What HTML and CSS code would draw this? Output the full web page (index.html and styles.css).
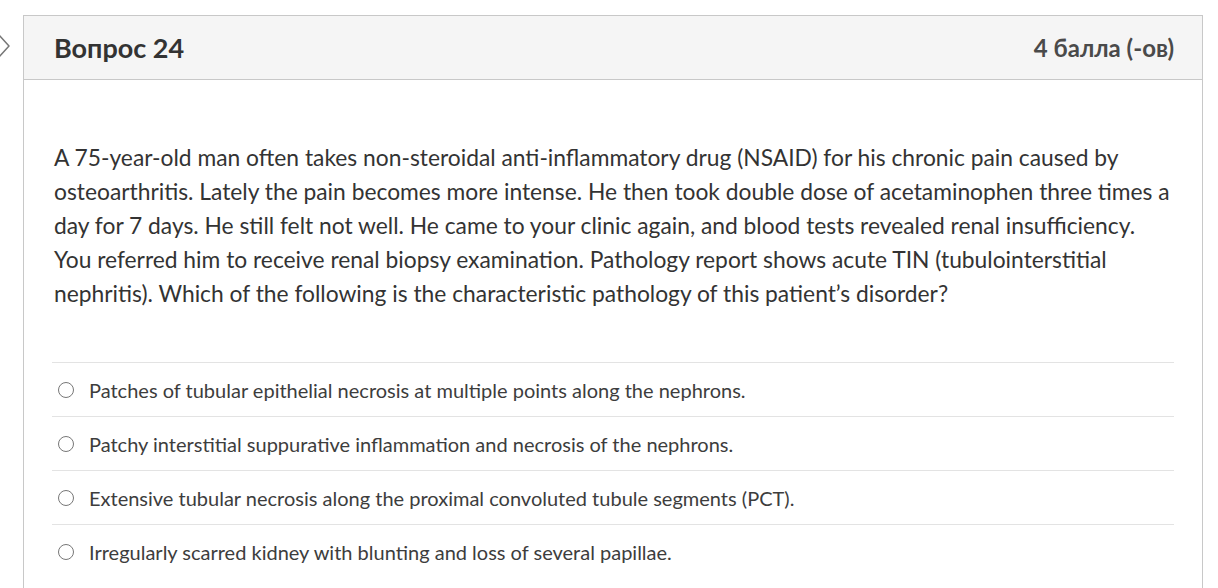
FILE: index.html
```html
<!DOCTYPE html>
<html>
<head>
<meta charset="utf-8">
<link rel="stylesheet" href="styles.css">
</head>
<body>
<div class="page">
  <div class="nav">
    <svg width="23" height="64" viewBox="0 0 23 64"><path d="M-2 19 L9 31 L-2 43" fill="none" stroke="#777" stroke-width="1.5" stroke-linejoin="round" stroke-linecap="round"/></svg>
  </div>
  <div class="card">
    <div class="card-header">
      <h2 class="title">Вопрос 24</h2>
      <div class="points">4 балла (-ов)</div>
    </div>
    <div class="card-body">
      <p class="question">A 75-year-old man often takes non-steroidal anti-inflammatory drug (NSAID) for his chronic pain caused by osteoarthritis. Lately the pain becomes more intense. He then took double dose of acetaminophen three times a day for 7 days. He still felt not well. He came to your clinic again, and blood tests revealed renal insufficiency. You referred him to receive renal biopsy examination. Pathology report shows acute TIN (tubulointerstitial nephritis). Which of the following is the characteristic pathology of this patient’s disorder?</p>
      <div class="answers">
        <label class="answer"><span class="radio"></span><span>Patches of tubular epithelial necrosis at multiple points along the nephrons.</span></label>
        <label class="answer"><span class="radio"></span><span>Patchy interstitial suppurative inflammation and necrosis of the nephrons.</span></label>
        <label class="answer"><span class="radio"></span><span>Extensive tubular necrosis along the proximal convoluted tubule segments (PCT).</span></label>
        <label class="answer"><span class="radio"></span><span>Irregularly scarred kidney with blunting and loss of several papillae.</span></label>
      </div>
    </div>
  </div>
</div>
</body>
</html>
```

FILE: styles.css
```css
html, body {
  margin: 0;
  padding: 0;
  background: #fff;
  overflow: hidden;
}
body {
  font-family: Lato, "Open Sans", sans-serif;
  color: #333;
}
.page {
  display: flex;
  padding-top: 15px;
  height: 600px;
  box-sizing: border-box;
}
.nav {
  width: 23px;
  flex: none;
}
.nav svg {
  display: block;
}
.card {
  width: 1180px;
  flex: none;
  border: 1px solid #c8c8c8;
  border-bottom: none;
  box-sizing: border-box;
}
.card-header {
  height: 64px;
  background: #f5f5f5;
  border-bottom: 1px solid #c8c8c8;
  display: flex;
  align-items: center;
  justify-content: space-between;
  padding: 0 28px 0 30px;
  box-sizing: border-box;
}
.title {
  margin: 0;
  font-size: 27px;
  font-weight: 700;
  color: #333;
}
.points {
  font-size: 24px;
  font-weight: 700;
  color: #4a4a4a;
}
.card-body {
  padding: 60px 28px 0 28px;
}
.question {
  margin: 0 0 52px 2px;
  font-size: 22.8px;
  line-height: 34px;
  color: #333;
}
.answers {
  display: flex;
  flex-direction: column;
}
.answer {
  display: flex;
  align-items: center;
  height: 54px;
  border-top: 1px solid #e3e3e3;
  font-size: 20px;
  color: #3d3d3d;
  box-sizing: border-box;
}
.radio {
  width: 16px;
  height: 16px;
  box-sizing: border-box;
  border: 1.5px solid #777;
  border-radius: 50%;
  margin: 0 15px 0 6px;
  flex: none;
}
```
